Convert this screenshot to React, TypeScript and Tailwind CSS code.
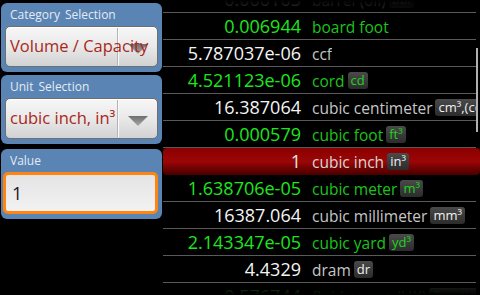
import React from "react";

type Row = { value: string; name: string; badge?: string; tone: "green" | "white" | "sel" };

const rows: Row[] = [
    { value: "0.000103", name: "barrel (oil)", badge: "bbl", tone: "white" },
    { value: "0.006944", name: "board foot", tone: "green" },
    { value: "5.787037e-06", name: "ccf", tone: "white" },
    { value: "4.521123e-06", name: "cord", badge: "cd", tone: "green" },
    { value: "16.387064", name: "cubic centimeter", badge: "cm³,(cc)", tone: "white" },
    { value: "0.000579", name: "cubic foot", badge: "ft³", tone: "green" },
    { value: "1", name: "cubic inch", badge: "in³", tone: "sel" },
    { value: "1.638706e-05", name: "cubic meter", badge: "m³", tone: "green" },
    { value: "16387.064", name: "cubic millimeter", badge: "mm³", tone: "white" },
    { value: "2.143347e-05", name: "cubic yard", badge: "yd³", tone: "green" },
    { value: "4.4329", name: "dram", badge: "dr", tone: "white" },
    { value: "0.576744", name: "fluid ounce (UK)", badge: "fl oz (UK)", tone: "green" },
];

const numColor = { green: "text-[#1ee61e]", white: "text-[#f4f4f4]", sel: "text-[#e8e8e8]" };
const nameColor = { green: "text-[#1cc41c]", white: "text-[#c6c6c6]", sel: "text-[#d6d6d6]" };

function Arrow() {
    return (
        <svg width="20" height="10" viewBox="0 0 20 10" className="shrink-0">
            <defs>
                <linearGradient id="arr" x1="0" y1="0" x2="0" y2="1">
                    <stop offset="0" stopColor="#6e6e6e" />
                    <stop offset="1" stopColor="#a8a8a8" />
                </linearGradient>
            </defs>
            <path d="M0 0 L20 0 L10 10 Z" fill="url(#arr)" />
        </svg>
    );
}

function Spinner({ text }: { text: string }) {
    return (
        <div className="relative flex h-[41px] items-center rounded-[5px] border border-[#6f6f6f] bg-linear-to-b from-[#f7f7f7] via-[#e9e9e9] to-[#d2d2d2] shadow-[inset_0_1px_0_#ffffff]">
            <div className="absolute top-[1px] bottom-[1px] left-[111px] w-px bg-[#b4b4b4] shadow-[1px_0_0_#fafafa]" />
            <div className="absolute left-[122px] top-[17px]">
                <Arrow />
            </div>
            <span className="relative whitespace-nowrap pl-[4px] text-[16.5px] text-[#a8281a]">{text}</span>
        </div>
    );
}

function Box({ label, children, className }: { label: string; children: React.ReactNode; className: string }) {
    return (
        <div className={`rounded-[6px] bg-[#5a84b4] px-[4px] pb-[5px] ${className}`}>
            <div className="flex h-[23px] items-center pl-[5px] text-[12px] text-[#e4ebf3] [word-spacing:2px]">{label}</div>
            {children}
        </div>
    );
}

export default function App() {
    return (
        <div className="flex h-[295px] w-[480px] overflow-hidden bg-black" style={{ fontFamily: '"Open Sans", "Noto Sans", sans-serif' }}>
            <div className="w-[163px] shrink-0 pl-[1px] pr-[1px]">
                <Box label="Category Selection" className="mt-[3px]">
                    <Spinner text="Volume / Capacity" />
                </Box>
                <Box label="Unit Selection" className="mt-[3px]">
                    <Spinner text="cubic inch, in³" />
                </Box>
                <Box label="Value" className="mt-[5px]">
                    <div className="ml-[-2px] mr-0 flex h-[42px] items-center rounded-[5px] border-[3px] border-[#ff8410] bg-linear-to-b from-[#e4e4e4] to-[#f2f2f2] pl-[6px] text-[18px] text-[#1a1a1a]">
                        1
                    </div>
                </Box>
            </div>

            <div className="relative flex-1 overflow-hidden">
                <div className="-mt-[14px]">
                    {rows.map((r) => (
                        <div
                            key={r.name}
                            className={
                                r.tone === "sel"
                                    ? "mr-0 flex h-[27px] items-center rounded-[4px] bg-linear-to-b from-[#8a0000] via-[#9c0606] to-[#480000]"
                                    : "mr-[4px] flex h-[27px] items-center border-b border-[#5a5a5a]"
                            }
                        >
                            <div className="flex items-baseline overflow-hidden whitespace-nowrap pl-[2px]">
                                <span className={`w-[136px] shrink-0 text-right text-[18px] ${numColor[r.tone]}`}>{r.value}</span>
                                <span className={`ml-[11px] text-[15.5px] ${nameColor[r.tone]}`}>{r.name}</span>
                                {r.badge && (
                                    <span className={`ml-[3px] self-center rounded-[3px] bg-linear-to-b from-[#4a4a4a] to-[#2c2c2c] px-[3px] text-[13px] leading-[17px] ${r.tone === "green" ? "text-[#1cd41c]" : "text-[#f0f0f0]"}`}>
                                        {r.badge}
                                    </span>
                                )}
                            </div>
                        </div>
                    ))}
                </div>
                <div className="pointer-events-none absolute inset-x-0 top-0 h-[12px] bg-linear-to-b from-black to-black/70" />
                <div className="pointer-events-none absolute inset-x-0 bottom-0 h-[12px] bg-linear-to-t from-black to-black/50" />
                <div className="absolute right-[2px] top-[48px] h-[84px] w-[2px] bg-[#b0b0b0]" />
            </div>
        </div>
    );
}
